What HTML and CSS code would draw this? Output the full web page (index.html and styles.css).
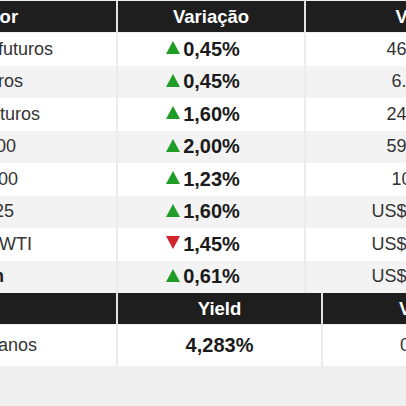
FILE: index.html
```html
<!DOCTYPE html>
<html lang="pt-BR">
<head>
    <meta charset="UTF-8">
    <meta name="viewport" content="width=device-width, initial-scale=1.0">
    <title>Mercados</title>
    <link rel="stylesheet" href="styles.css">
</head>
<body>
    <div class="board">
        <div class="quotes">
            <div class="row head">
                <div class="cell name">Índice / setor</div>
                <div class="cell var">Variação</div>
                <div class="cell val">Valor</div>
            </div>
            <div class="row">
                <div class="cell name">Dow Jones futuros</div>
                <div class="cell var"><svg class="up" viewBox="0 0 14 13"><path d="M7 0L14 13H0z"/></svg>0,45%</div>
                <div class="cell val">46.512</div>
            </div>
            <div class="row">
                <div class="cell name">Russell futuros</div>
                <div class="cell var"><svg class="up" viewBox="0 0 14 13"><path d="M7 0L14 13H0z"/></svg>0,45%</div>
                <div class="cell val">6.712</div>
            </div>
            <div class="row">
                <div class="cell name">NASDAQ futuros</div>
                <div class="cell var"><svg class="up" viewBox="0 0 14 13"><path d="M7 0L14 13H0z"/></svg>1,60%</div>
                <div class="cell val">24.893</div>
            </div>
            <div class="row">
                <div class="cell name">S&amp;P/ASX 200</div>
                <div class="cell var"><svg class="up" viewBox="0 0 14 13"><path d="M7 0L14 13H0z"/></svg>2,00%</div>
                <div class="cell val">59.120</div>
            </div>
            <div class="row">
                <div class="cell name">DJ Global 100</div>
                <div class="cell var"><svg class="up" viewBox="0 0 14 13"><path d="M7 0L14 13H0z"/></svg>1,23%</div>
                <div class="cell val">103,4</div>
            </div>
            <div class="row">
                <div class="cell name">Ouro - dez/25</div>
                <div class="cell var"><svg class="up" viewBox="0 0 14 13"><path d="M7 0L14 13H0z"/></svg>1,60%</div>
                <div class="cell val">US$ 4.012</div>
            </div>
            <div class="row">
                <div class="cell name">Petróleo — WTI</div>
                <div class="cell var"><svg class="down" viewBox="0 0 14 13"><path d="M0 0H14L7 13z"/></svg>1,45%</div>
                <div class="cell val">US$ 62,78</div>
            </div>
            <div class="row">
                <div class="cell name strong">ETF Bitcoin</div>
                <div class="cell var"><svg class="up" viewBox="0 0 14 13"><path d="M7 0L14 13H0z"/></svg>0,61%</div>
                <div class="cell val">US$ 63,21</div>
            </div>
        </div>
        <div class="quotes bonds">
            <div class="row head">
                <div class="cell name">Título</div>
                <div class="cell var">Yield</div>
                <div class="cell val">Variação</div>
            </div>
            <div class="row">
                <div class="cell name">Tesouro 10 anos</div>
                <div class="cell var">4,283%</div>
                <div class="cell val">0,021 p.p.</div>
            </div>
        </div>
    </div>
</body>
</html>
```

FILE: styles.css
```css
* {
    margin: 0;
    padding: 0;
    box-sizing: border-box;
}

body {
    background: #efefef;
    font-family: "Liberation Sans", Arial, sans-serif;
}

.board {
    width: 406px;
    height: 406px;
    overflow: hidden;
    padding-top: 1px;
    background: #efefef;
}

.quotes {
    margin-left: -108px;
    width: max-content;
}

.row {
    display: grid;
    grid-template-columns: 224px 186px 216px;
    column-gap: 2px;
    height: 32.5px;
    background: #ececec;
    color: #333;
    font-size: 18px;
}

.bonds .row {
    grid-template-columns: 224px 203px 234px;
}

.bonds .row:not(.head) {
    height: 41px;
}

.cell {
    display: flex;
    align-items: center;
    background: #fff;
    white-space: nowrap;
}

.row:nth-child(odd):not(.head) .cell {
    background: #f3f3f3;
}

.head {
    height: 31px;
    margin-bottom: 1px;
    background: #e2e2e2;
}

.head .cell {
    background: #1e1e1e;
    color: #fff;
    font-weight: bold;
    font-size: 18.5px;
}

.name {
    padding-left: 12px;
}

.name.strong {
    font-weight: bold;
    color: #222;
}

.var {
    justify-content: center;
    padding-right: 16px;
    font-weight: bold;
    font-size: 20px;
    color: #1b1b1b;
}

.head .var {
    padding-right: 0;
    justify-content: center;
}

.head .val {
    padding-left: 8px;
}

.bonds .head .val {
    padding-left: 0;
    padding-right: 6px;
}

.bonds .var {
    padding-right: 0;
}

.var svg {
    width: 14px;
    height: 13px;
    margin-right: 3px;
    margin-top: -3px;
}

.up {
    fill: #1f9d27;
}

.down {
    fill: #d3232b;
}

.val {
    justify-content: center;
}
```
